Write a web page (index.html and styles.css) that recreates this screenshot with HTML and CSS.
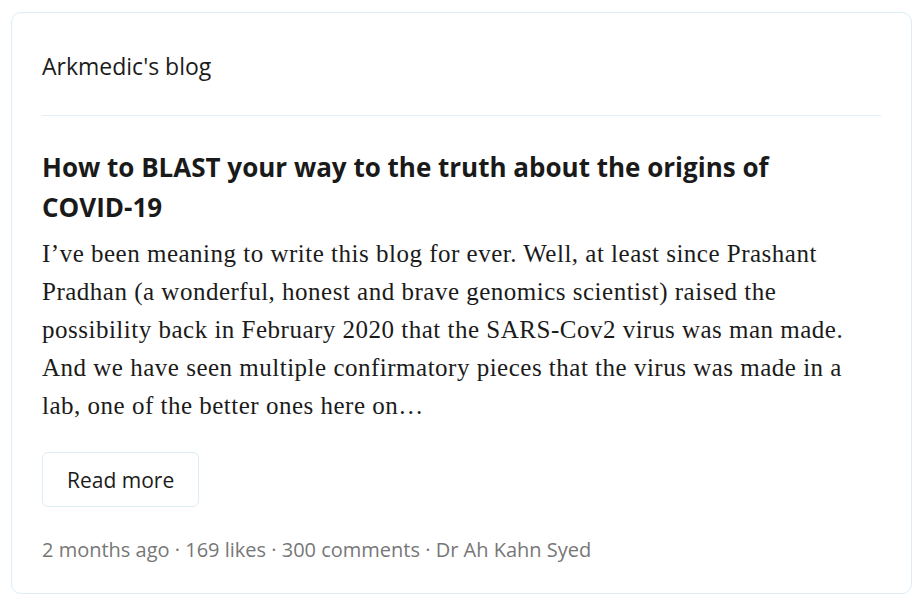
FILE: index.html
```html
<!DOCTYPE html>
<html lang="en">
<head>
    <meta charset="UTF-8">
    <meta name="viewport" content="width=device-width, initial-scale=1.0">
    <title>Arkmedic's blog</title>
    <link rel="stylesheet" href="styles.css">
</head>
<body>
    <div class="card">
        <div class="card-header">
            <span class="blog-name">Arkmedic's blog</span>
        </div>

        <div class="post">
            <h2 class="post-title">How to BLAST your way to the truth about the origins of <span class="nowrap">COVID-19</span></h2>
            <p class="post-excerpt">I’ve been meaning to write this blog for ever. Well, at least since Prashant Pradhan (a wonderful, honest and brave genomics scientist) raised the possibility back in February 2020 that the SARS-Cov2 virus was man made. And we have seen multiple confirmatory pieces that the virus was made in a lab, one of the better ones here on…</p>

            <a class="read-more" href="#">Read more</a>

            <div class="post-meta">2 months ago · 169 likes · 300 comments · Dr Ah Kahn Syed</div>
        </div>
    </div>
</body>
</html>
```

FILE: styles.css
```css
body {
    margin: 0;
    padding: 12px 11px 14px;
    background-color: #fff;
    font-family: 'Open Sans', 'Noto Sans', sans-serif;
    color: #1b1b1b;
}
.card {
    border: 1px solid #dcedf6;
    border-radius: 10px;
    padding: 0 30px 28px;
}
.card-header {
    padding-top: 38px;
    padding-bottom: 34px;
    border-bottom: 1px solid #e4eff5;
}
.blog-name {
    font-size: 23px;
    line-height: 30px;
}
.post-title {
    margin: 31px 0 0;
    font-size: 26px;
    font-weight: 700;
    line-height: 40px;
    color: #1a1a1a;
}
.nowrap {
    white-space: nowrap;
}
.post-excerpt {
    margin: 8px 0 0;
    font-family: 'Liberation Serif', serif;
    font-size: 25px;
    letter-spacing: 0.5px;
    line-height: 38px;
    color: #1b1b1b;
}
.read-more {
    display: inline-block;
    margin-top: 27px;
    padding: 2px 24px 0;
    height: 55px;
    line-height: 51px;
    box-sizing: border-box;
    border: 1px solid #dcedf6;
    border-radius: 6px;
    font-size: 21px;
    color: #1b1b1b;
    text-decoration: none;
}
.post-meta {
    margin-top: 28px;
    font-size: 20px;
    line-height: 30px;
    color: #777;
}
```
